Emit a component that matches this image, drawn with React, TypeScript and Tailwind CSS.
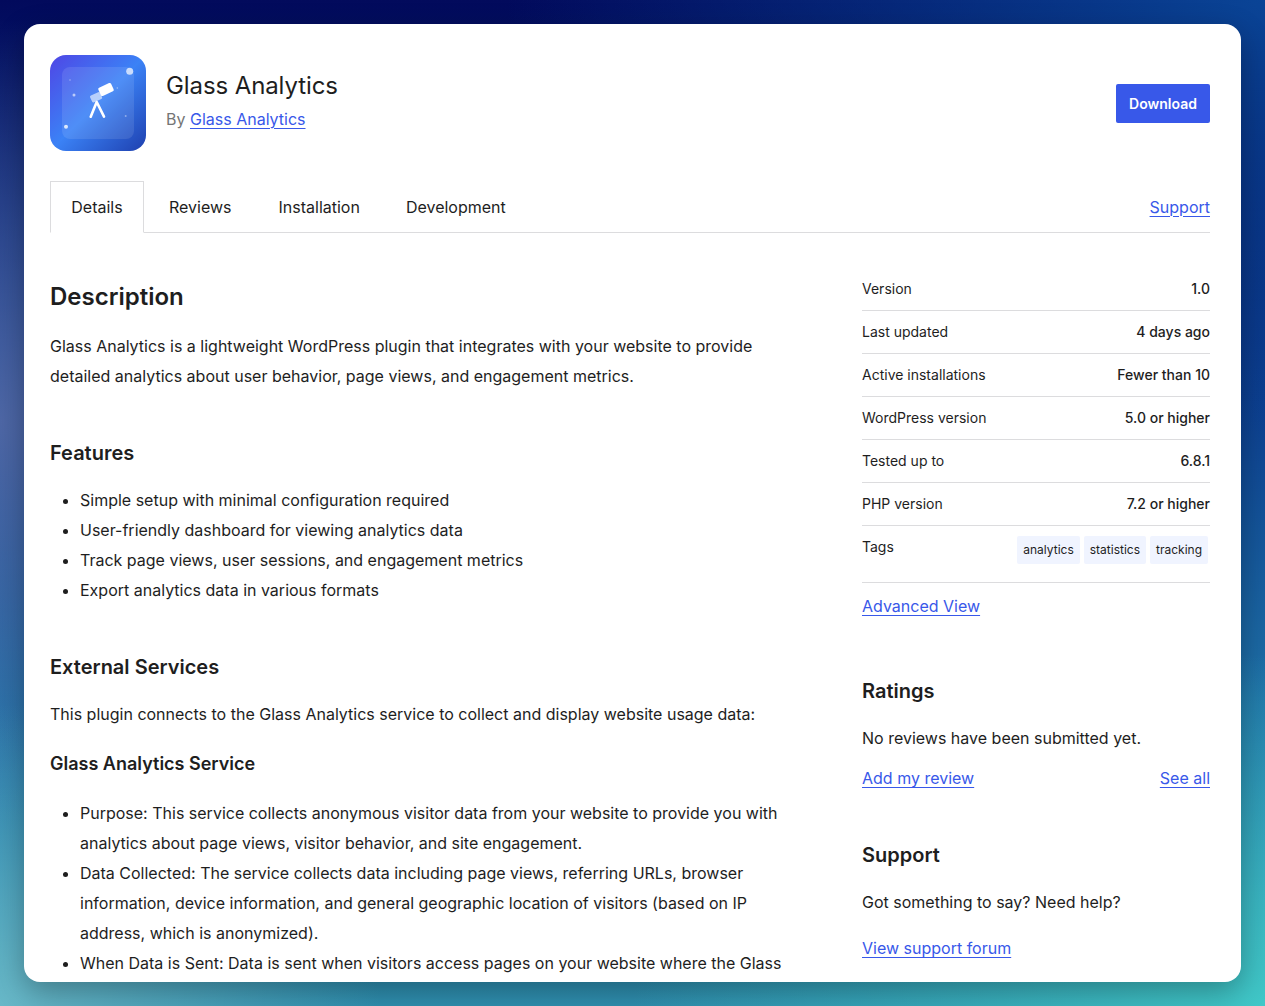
const A = ({ children }: { children: React.ReactNode }) => (
  <a href="#" className="text-[#3858e9] underline underline-offset-[3px] decoration-1">{children}</a>
);

function Icon() {
  return (
    <svg width="96" height="96" viewBox="0 0 96 96" className="shrink-0">
      <defs>
        <linearGradient id="g" x1="0" y1="0" x2="1" y2="1">
          <stop offset="0" stopColor="#4f46e5" />
          <stop offset="0.5" stopColor="#3b82f6" />
          <stop offset="1" stopColor="#1e40af" />
        </linearGradient>
      </defs>
      <rect width="96" height="96" rx="16" fill="url(#g)" />
      <rect x="12" y="12" width="72" height="72" rx="8" fill="#fff" fillOpacity="0.1" />
      <circle cx="79.7" cy="16.3" r="3.5" fill="#fff" fillOpacity="0.7" />
      <circle cx="24" cy="40" r="1.5" fill="#fff" fillOpacity="0.6" />
      <circle cx="16" cy="71.7" r="2" fill="#fff" fillOpacity="0.8" />
      <circle cx="20" cy="25" r="0.7" fill="#fff" fillOpacity="0.5" />
      <circle cx="75.7" cy="61" r="1" fill="#fff" fillOpacity="0.4" />
      <circle cx="67.3" cy="33" r="0.7" fill="#fff" fillOpacity="0.5" />
      <path d="M46.7 47 L40.7 61.7 M46.7 47 L54 61.7" stroke="#fff" strokeWidth="2.6" strokeLinecap="round" fill="none" />
      <rect x="49" y="30" width="14" height="9" rx="1.5" fill="#fff" transform="rotate(-25 56 34.5)" />
      <rect x="40.5" y="38.5" width="11" height="7.5" rx="1.5" fill="#fff" fillOpacity="0.6" transform="rotate(-25 46 42)" />
    </svg>
  );
}

const meta = [
  ["Version", "1.0"],
  ["Last updated", "4 days ago"],
  ["Active installations", "Fewer than 10"],
  ["WordPress version", "5.0 or higher"],
  ["Tested up to", "6.8.1"],
  ["PHP version", "7.2 or higher"],
];

export default function App() {
  return (
    <div className="h-[1006px] overflow-hidden p-6 font-[Inter,sans-serif] text-[#1e1e1e] bg-[radial-gradient(ellipse_30%_30%_at_0%_100%,#68b8c8,transparent),radial-gradient(ellipse_50%_35%_at_100%_100%,#40c8c8,transparent),radial-gradient(ellipse_25%_40%_at_0%_42%,rgba(90,110,170,0.85),transparent),radial-gradient(ellipse_60%_45%_at_100%_0%,#0a4496,transparent),linear-gradient(180deg,#020a5c_0%,#0c3f90_40%,#1f72a8_70%,#2f90b0_100%)]">
      <div className="h-[958px] overflow-hidden rounded-2xl bg-white pl-[26px] pr-[31px] pt-[31px] shadow-[0_10px_30px_rgba(0,0,0,0.3)]">
        <header className="flex items-center gap-5">
          <Icon />
          <div className="flex-1 -mt-[5px]">
            <h1 className="text-2xl leading-[30px] font-normal tracking-[-0.1px]">Glass Analytics</h1>
            <p className="mt-[6px] text-base leading-6 text-[#757575]">By <A>Glass Analytics</A></p>
          </div>
          <button className="h-[39px] w-[94px] rounded-[2px] bg-[#3858e9] pt-px text-sm font-semibold text-white">Download</button>
        </header>

        <nav className="mt-[30px] flex h-[52px] items-stretch border-b border-[#dcdcde] text-base">
          <a className="-mb-px flex w-[94px] items-center justify-center border border-b-white border-[#dcdcde] bg-white">Details</a>
          <a className="ml-[25px] flex items-center">Reviews</a>
          <a className="ml-[47px] flex items-center">Installation</a>
          <a className="ml-[46px] flex items-center">Development</a>
          <span className="ml-auto flex items-center"><A>Support</A></span>
        </nav>

        <div className="mt-[35px] flex justify-between">
          <main className="w-[740px] text-base leading-[30px]">
            <h2 className="mt-[14px] text-2xl leading-[30px] font-semibold">Description</h2>
            <p className="mt-[19px]">Glass Analytics is a lightweight WordPress plugin that integrates with your website to provide detailed analytics about user behavior, page views, and engagement metrics.</p>
            <h3 className="mt-[47px] text-xl leading-[30px] font-semibold">Features</h3>
            <ul className="mt-[17px] list-disc pl-[30px]">
              <li>Simple setup with minimal configuration required</li>
              <li>User-friendly dashboard for viewing analytics data</li>
              <li>Track page views, user sessions, and engagement metrics</li>
              <li>Export analytics data in various formats</li>
            </ul>
            <h3 className="mt-[47px] text-xl leading-[30px] font-semibold">External Services</h3>
            <p className="mt-[17px]">This plugin connects to the Glass Analytics service to collect and display website usage data:</p>
            <h4 className="mt-5 text-lg leading-[30px] font-semibold">Glass Analytics Service</h4>
            <ul className="mt-[19px] list-disc pl-[30px]">
              <li>Purpose: This service collects anonymous visitor data from your website to provide you with analytics about page views, visitor behavior, and site engagement.</li>
              <li>Data Collected: The service collects data including page views, referring URLs, browser information, device information, and general geographic location of visitors (based on IP address, which is anonymized).</li>
              <li>When Data is Sent: Data is sent when visitors access pages on your website where the Glass</li>
            </ul>
          </main>

          <aside className="w-[348px] text-base">
            <dl className="text-sm">
              {meta.map(([k, v]) => (
                <div key={k} className="flex h-[43px] items-center justify-between border-b border-[#dcdcde]">
                  <dt>{k}</dt>
                  <dd className="font-medium">{v}</dd>
                </div>
              ))}
              <div className="flex h-[57px] items-start justify-between border-b border-[#dcdcde] pt-[11px]">
                <dt>Tags</dt>
                <dd className="mt-[-1px] mr-0.5 flex gap-1 text-xs">
                  <span className="flex h-7 items-center rounded-[2px] bg-[#f0f4ff] px-[6px]">analytics</span>
                  <span className="flex h-7 items-center rounded-[2px] bg-[#f0f4ff] px-[6px]">statistics</span>
                  <span className="flex h-7 items-center rounded-[2px] bg-[#f0f4ff] px-[6px]">tracking</span>
                </dd>
              </div>
            </dl>
            <p className="mt-[11px] leading-6"><A>Advanced View</A></p>
            <h3 className="mt-[58px] text-xl leading-[30px] font-semibold">Ratings</h3>
            <p className="mt-[17px] leading-[30px]">No reviews have been submitted yet.</p>
            <div className="mt-[10px] flex justify-between leading-[30px]"><A>Add my review</A><A>See all</A></div>
            <h3 className="mt-[47px] text-xl leading-[30px] font-semibold">Support</h3>
            <p className="mt-[17px] leading-[30px]">Got something to say? Need help?</p>
            <p className="mt-[16px] leading-[30px]"><A>View support forum</A></p>
          </aside>
        </div>
      </div>
    </div>
  );
}
